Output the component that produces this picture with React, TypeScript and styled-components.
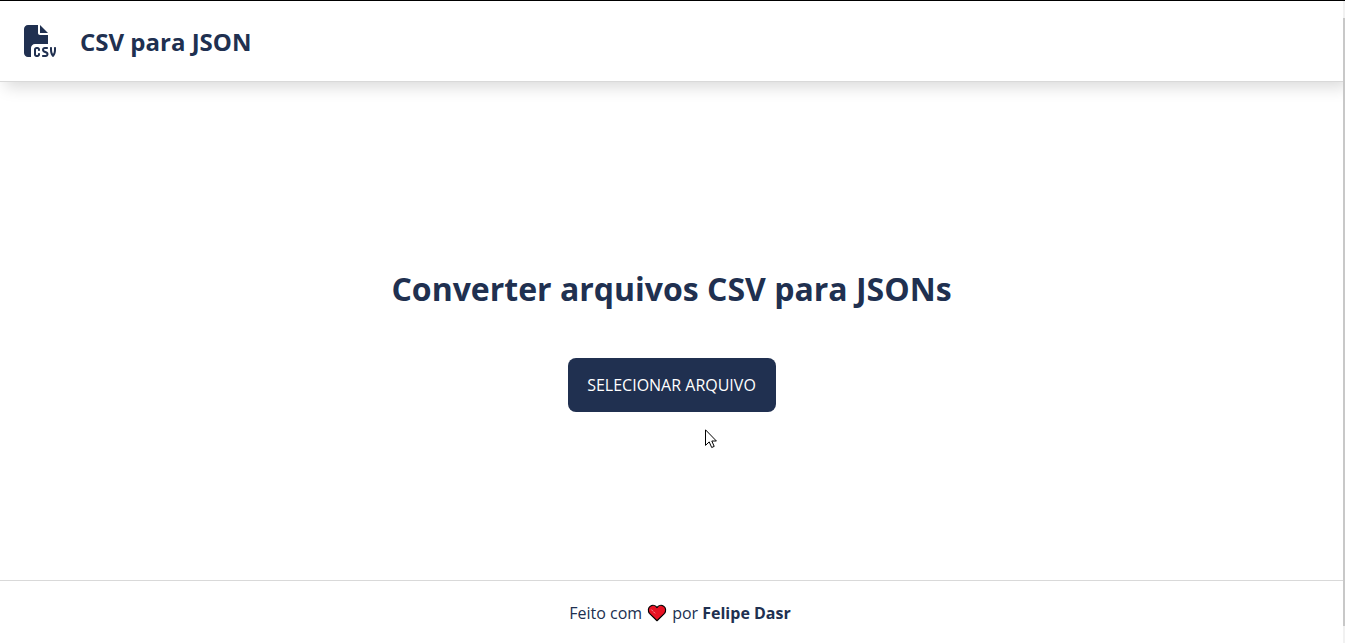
import React from "react";
import styled, { createGlobalStyle } from "styled-components";
import { FaFileCsv } from "react-icons/fa6";

const navy = "#203050";
const line = "#d9d9d9";

const GlobalStyle = createGlobalStyle`
  *, *::before, *::after { box-sizing: border-box; }
  body {
    margin: 0;
    background: #ffffff;
    color: ${navy};
    font-family: "Open Sans", sans-serif;
    font-size: 16px;
    line-height: 24px;
  }
`;

const Window = styled.div`
  display: flex;
  min-height: 100vh;
  border-top: 1px solid #000000;
`;

const Page = styled.div`
  flex: 1;
  min-width: 0;
  display: flex;
  flex-direction: column;
  overflow: hidden;
`;

const Header = styled.header`
  display: flex;
  align-items: flex-start;
  gap: 24px;
  padding: 24px 24px 23px;
  border-bottom: 1px solid ${line};
  box-shadow: 5px 5px 15px rgba(0, 0, 0, 0.15);
`;

const BrandName = styled.h1`
  margin: 0;
  font-size: 24px;
  line-height: 33px;
  font-weight: 700;
`;

const Main = styled.main`
  flex: 1;
  display: flex;
  flex-direction: column;
  align-items: center;
  justify-content: center;
  gap: 46px;
  padding: 40px 24px 24px;
`;

const Title = styled.h2`
  margin: 0;
  font-size: 32px;
  line-height: 46px;
  font-weight: 700;
  text-align: center;
`;

const SelectButton = styled.button`
  min-width: 208px;
  padding: 15px 19px;
  border: 0;
  border-radius: 8px;
  background: ${navy};
  color: #ffffff;
  font: inherit;
  text-transform: uppercase;
  cursor: pointer;
`;

const Footer = styled.footer`
  display: flex;
  align-items: center;
  justify-content: center;
  gap: 5px;
  padding: 20px 24px 18px 41px;
  border-top: 1px solid ${line};
`;

const AuthorLink = styled.a`
  color: inherit;
  font-weight: 700;
  text-decoration: none;
`;

const ScrollTrack = styled.div`
  width: 2px;
  padding: 17px 0;
  display: flex;
  background: #f1f1f1;
`;

const ScrollThumb = styled.div`
  flex: 1;
  background: #c8c8c8;
`;

const Pointer = styled.svg`
  position: absolute;
  left: 705px;
  top: 429px;
  pointer-events: none;
`;

function Heart() {
  return (
    <svg width="20" height="18" viewBox="-0.5 -0.5 21 19" role="img" aria-label="amor">
      <path
        d="M10 17.2 L2 9.3 C0.2 6.9 0.6 3.2 3 1.8 C5.4 0.4 8.5 0.9 10 3.3 C11.5 0.9 14.6 0.4 17 1.8 C19.4 3.2 19.8 6.9 18 9.3 Z"
        fill="#e81224"
        stroke="#000000"
        strokeWidth="1.2"
        strokeLinejoin="round"
      />
      <path d="M4 5.4 L8.6 10" stroke="#f4a0a8" strokeWidth="1" strokeDasharray="2 1" />
    </svg>
  );
}

export default function App() {
  return (
    <>
      <GlobalStyle />
      <Window>
        <Page>
          <Header>
            <FaFileCsv size={32} aria-hidden="true" />
            <BrandName>CSV para JSON</BrandName>
          </Header>
          <Main>
            <Title>Converter arquivos CSV para JSONs</Title>
            <SelectButton type="button">Selecionar arquivo</SelectButton>
          </Main>
          <Footer>
            <span>Feito com</span>
            <Heart />
            <span>
              por <AuthorLink href="#autor">Felipe Dasr</AuthorLink>
            </span>
          </Footer>
        </Page>
        <ScrollTrack aria-hidden="true">
          <ScrollThumb />
        </ScrollTrack>
      </Window>
      <Pointer width="12" height="20" viewBox="0 0 12 20" aria-hidden="true">
        <path
          d="M0.5 0.8 V16.4 L4.2 12.9 L6.7 18.5 L9.2 17.4 L6.8 12 H11.4 Z"
          fill="#ffffff"
          stroke="#000000"
          strokeWidth="1"
        />
      </Pointer>
    </>
  );
}
